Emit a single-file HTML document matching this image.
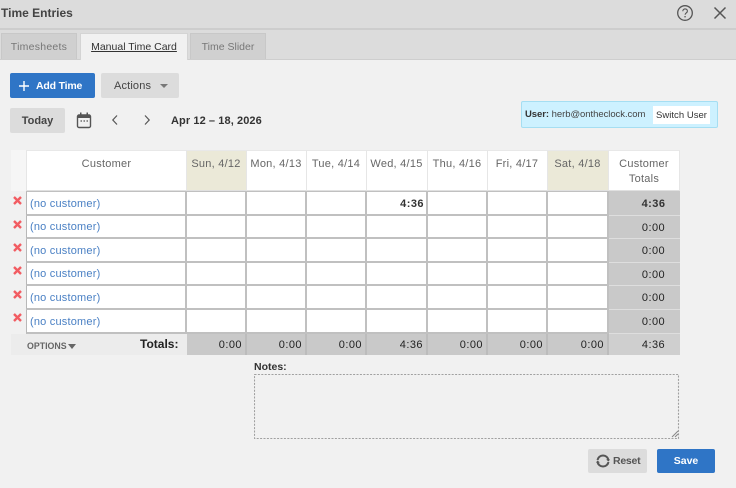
<!DOCTYPE html>
<html><head><meta charset="utf-8"><style>
html,body{margin:0;padding:0;width:736px;height:488px;overflow:hidden;background:#f1f1f1;font-family:"Liberation Sans",sans-serif;color:#333}
.a{position:absolute;white-space:nowrap}
table{position:absolute;left:26px;top:150px;width:654px;table-layout:fixed;border-collapse:separate;border-spacing:0;font-size:11px;letter-spacing:.45px}
td{padding:0;box-sizing:border-box;overflow:hidden;white-space:nowrap}
.h td{height:41px;background:#fff;color:#666;text-align:center;vertical-align:top;padding:6px 1px 0 0;line-height:15px;border-right:1px solid #e6e6e6;border-top:1px solid #e8e8e8;border-bottom:1px solid #e0e0e0;letter-spacing:.25px}
.h td.w{background:#ebe9d8}
.r td{background:#fff;border-right:2px solid #c0c0c0;border-bottom:2px solid #c0c0c0;text-align:right;padding:1px 2px 0 0;font-weight:bold;color:#333;font-size:11px}
.r td.c{border-left:1px solid #b8b8b8;text-align:left;padding-left:3px;color:#4a80c4;font-weight:normal;letter-spacing:.2px}
.r td.t{background:#c9c9c9;border:0;border-bottom:1px solid #dedede;text-align:center;padding:1px 0 0 18px;color:#333;font-weight:bold}
.r td.o{font-weight:normal;color:#222}
.f td{height:21px;background:#c9c9c9;border-right:2px solid #bcbcbc;text-align:right;padding:1px 3px 0 0;color:#222;font-weight:normal}
.f td.n{background:#ececec;border:0}
.f td.t{background:#cfcfcf;border:0;text-align:center;padding:1px 0 0 18px}
.x{position:absolute;left:13px}
</style></head><body>
<div class="a" style="left:0;top:0;width:736px;height:28px;background:#dcdcdc;border-bottom:2px solid #cdcdcd"></div>
<div class="a" style="left:0;top:30px;width:736px;height:29px;background:#dcdcdc;border-bottom:1px solid #cecece"></div>
<div class="a" style="left:1px;top:5px;font-size:12px;font-weight:bold;color:#444;line-height:17px">Time Entries</div>
<svg class="a" style="left:676px;top:4px" width="18" height="18" viewBox="0 0 18 18"><circle cx="9" cy="9" r="7.3" fill="none" stroke="#555" stroke-width="1.3"/><path d="M6.8 7.2c0-3 4.6-3 4.6-.1 0 1.800-2.300 1.800-2.300 3.600" fill="none" stroke="#555" stroke-width="1.100"/><rect x="8.400" y="12" width="1.300" height="1.400" fill="#555"/></svg>
<svg class="a" style="left:713px;top:6px" width="14" height="14" viewBox="0 0 14 14"><path d="M1.500 1.500L12.500 12.500M12.500 1.500L1.500 12.500" stroke="#555" stroke-width="1.500" fill="none"/></svg>

<div class="a" style="left:1px;top:33px;width:76px;height:26px;background:#d0d0d0;border:1px solid #c8c8c8;border-bottom:0;box-sizing:border-box;text-align:center;font-size:10.500px;line-height:27px;color:#777;letter-spacing:.25px">Timesheets</div>
<div class="a" style="left:80px;top:33px;width:108px;height:27px;background:#f1f1f1;border:1px solid #d4d4d4;border-bottom:0;box-sizing:border-box;text-align:center;font-size:10.500px;line-height:27px;color:#333"><span style="text-decoration:underline">Manual Time Card</span></div>
<div class="a" style="left:190px;top:33px;width:76px;height:26px;background:#d0d0d0;border:1px solid #c8c8c8;border-bottom:0;box-sizing:border-box;text-align:center;font-size:10.500px;line-height:27px;color:#777">Time Slider</div>

<div class="a" style="left:10px;top:73px;width:85px;height:25px;background:#2f75c6;border-radius:2px"></div>
<svg class="a" style="left:19px;top:81px" width="10" height="10" viewBox="0 0 10 10"><path d="M5 0V10M0 5H10" stroke="#fff" stroke-width="1.400"/></svg>
<div class="a" style="left:36px;top:73px;font-size:10.500px;font-weight:bold;color:#fff;line-height:27px;letter-spacing:-.18px">Add Time</div>
<div class="a" style="left:101px;top:73px;width:78px;height:25px;background:#dcdcdc;border-radius:2px"></div>
<div class="a" style="left:114px;top:73px;font-size:11px;color:#444;line-height:27px;letter-spacing:.15px">Actions</div>
<div class="a" style="left:160px;top:84px;width:0;height:0;border-left:4px solid transparent;border-right:4px solid transparent;border-top:4px solid #777"></div>

<div class="a" style="left:10px;top:108px;width:55px;height:25px;background:#dcdcdc;border-radius:2px;text-align:center;font-size:11px;font-weight:bold;line-height:27px;color:#444">Today</div>
<svg class="a" style="left:76px;top:112px" width="16" height="17" viewBox="0 0 16 17"><rect x="1.500" y="3" width="13" height="12.500" rx="1.500" fill="none" stroke="#555" stroke-width="1.400"/><rect x="1.500" y="3" width="13" height="3" fill="#555"/><rect x="4" y="0.500" width="1.500" height="3" fill="#555"/><rect x="10.500" y="0.500" width="1.500" height="3" fill="#555"/><path d="M4.500 9h1.500M7.500 9h1.500M10.500 9h1.500" stroke="#555" stroke-width="1.200"/></svg>
<svg class="a" style="left:111px;top:114px" width="8" height="12" viewBox="0 0 8 12"><path d="M6 1.500L1.800 6L6 10.500" fill="none" stroke="#555" stroke-width="1.200"/></svg>
<svg class="a" style="left:143px;top:114px" width="8" height="12" viewBox="0 0 8 12"><path d="M2 1.500L6.200 6L2 10.500" fill="none" stroke="#555" stroke-width="1.200"/></svg>
<div class="a" style="left:171px;top:113px;font-size:11px;font-weight:bold;line-height:16px;color:#333;letter-spacing:.09px">Apr 12 – 18, 2026</div>

<div class="a" style="left:521px;top:101px;width:197px;height:27px;background:#cdf1ff;border:1px solid #a5def2;border-radius:2px;box-sizing:border-box"></div>
<div class="a" style="left:525px;top:107px;font-size:9.500px;line-height:15px;color:#444;letter-spacing:-.05px"><b style="color:#333">User:</b> herb@ontheclock.com</div>
<div class="a" style="left:653px;top:106px;width:57px;height:18px;background:#fff;font-size:9.500px;line-height:20px;text-align:center;color:#333;letter-spacing:.03px">Switch User</div>

<div class="a" style="left:11px;top:150px;width:15px;height:41px;background:#f6f6f6"></div>
<div class="a" style="left:11px;top:334px;width:175px;height:21px;background:#ececec"></div>

<table>
<colgroup><col style="width:161px"><col style="width:60px"><col style="width:60px"><col style="width:60px"><col style="width:61px"><col style="width:60px"><col style="width:60px"><col style="width:61px"><col style="width:71px"></colgroup>
<tr class="h"><td style="border-left:1px solid #e6e6e6;padding-right:0">Customer</td><td class="w">Sun, 4/12</td><td>Mon, 4/13</td><td>Tue, 4/14</td><td>Wed, 4/15</td><td>Thu, 4/16</td><td>Fri, 4/17</td><td class="w">Sat, 4/18</td><td style="padding-right:0">Customer<br>Totals</td></tr>
<tr class="r" style="height:25px"><td class="c" style="border-top:1px solid #c0c0c0">(no customer)</td><td style="border-top:1px solid #c0c0c0"></td><td style="border-top:1px solid #c0c0c0"></td><td style="border-top:1px solid #c0c0c0"></td><td style="border-top:1px solid #c0c0c0">4:36</td><td style="border-top:1px solid #c0c0c0"></td><td style="border-top:1px solid #c0c0c0"></td><td style="border-top:1px solid #c0c0c0"></td><td class="t">4:36</td></tr>
<tr class="r" style="height:23px"><td class="c">(no customer)</td><td></td><td></td><td></td><td></td><td></td><td></td><td></td><td class="t o">0:00</td></tr>
<tr class="r" style="height:24px"><td class="c">(no customer)</td><td></td><td></td><td></td><td></td><td></td><td></td><td></td><td class="t o">0:00</td></tr>
<tr class="r" style="height:23px"><td class="c">(no customer)</td><td></td><td></td><td></td><td></td><td></td><td></td><td></td><td class="t o">0:00</td></tr>
<tr class="r" style="height:24px"><td class="c">(no customer)</td><td></td><td></td><td></td><td></td><td></td><td></td><td></td><td class="t o">0:00</td></tr>
<tr class="r" style="height:24px"><td class="c">(no customer)</td><td></td><td></td><td></td><td></td><td></td><td></td><td></td><td class="t o">0:00</td></tr>
<tr class="f"><td class="n"></td><td>0:00</td><td>0:00</td><td>0:00</td><td>4:36</td><td>0:00</td><td>0:00</td><td>0:00</td><td class="t">4:36</td></tr>
</table>

<svg class="x" style="top:196px" width="9" height="9" viewBox="0 0 9 9"><path d="M1 1L8 8M8 1L1 8" stroke="#f25c62" stroke-width="2.400"/></svg>
<svg class="x" style="top:220px" width="9" height="9" viewBox="0 0 9 9"><path d="M1 1L8 8M8 1L1 8" stroke="#f25c62" stroke-width="2.400"/></svg>
<svg class="x" style="top:243px" width="9" height="9" viewBox="0 0 9 9"><path d="M1 1L8 8M8 1L1 8" stroke="#f25c62" stroke-width="2.400"/></svg>
<svg class="x" style="top:266px" width="9" height="9" viewBox="0 0 9 9"><path d="M1 1L8 8M8 1L1 8" stroke="#f25c62" stroke-width="2.400"/></svg>
<svg class="x" style="top:290px" width="9" height="9" viewBox="0 0 9 9"><path d="M1 1L8 8M8 1L1 8" stroke="#f25c62" stroke-width="2.400"/></svg>
<svg class="x" style="top:313px" width="9" height="9" viewBox="0 0 9 9"><path d="M1 1L8 8M8 1L1 8" stroke="#f25c62" stroke-width="2.400"/></svg>

<div class="a" style="left:27px;top:340px;font-size:8.800px;font-weight:bold;color:#666;line-height:12px">OPTIONS</div>
<div class="a" style="left:68px;top:344px;width:0;height:0;border-left:4.500px solid transparent;border-right:4.500px solid transparent;border-top:5px solid #666"></div>
<div class="a" style="left:140px;top:337px;font-size:12px;font-weight:bold;color:#222;line-height:15px">Totals:</div>

<div class="a" style="left:254px;top:361px;font-size:10.500px;font-weight:bold;color:#333;line-height:13px">Notes:</div>
<svg class="a" style="left:254px;top:374px" width="426" height="66" viewBox="0 0 426 66"><rect x="0.500" y="0.500" width="424" height="64" fill="none" stroke="#a0a0a0" stroke-width="1.100" stroke-dasharray="2 1.400"/><path d="M418 63L424 57M421 63L424 60" stroke="#888" stroke-width="1"/></svg>

<div class="a" style="left:588px;top:449px;width:59px;height:24px;background:#dcdcdc;border-radius:2px"></div>
<svg class="a" style="left:596px;top:454px" width="14" height="14" viewBox="0 0 14 14"><path d="M1.500 6A5.600 5.600 0 0 1 12.500 6M12.500 8A5.600 5.600 0 0 1 1.500 8" fill="none" stroke="#555" stroke-width="2"/><path d="M10 5.500H14L12.500 7.500zM0 8.500H4L1.500 6.500z" fill="#555"/></svg>
<div class="a" style="left:613px;top:449px;font-size:10.500px;font-weight:bold;line-height:25px;color:#555;letter-spacing:-.25px">Reset</div>
<div class="a" style="left:657px;top:449px;width:58px;height:24px;background:#2f75c6;border-radius:2px;text-align:center;font-size:10.500px;font-weight:bold;line-height:24px;color:#fff">Save</div>
</body></html>
